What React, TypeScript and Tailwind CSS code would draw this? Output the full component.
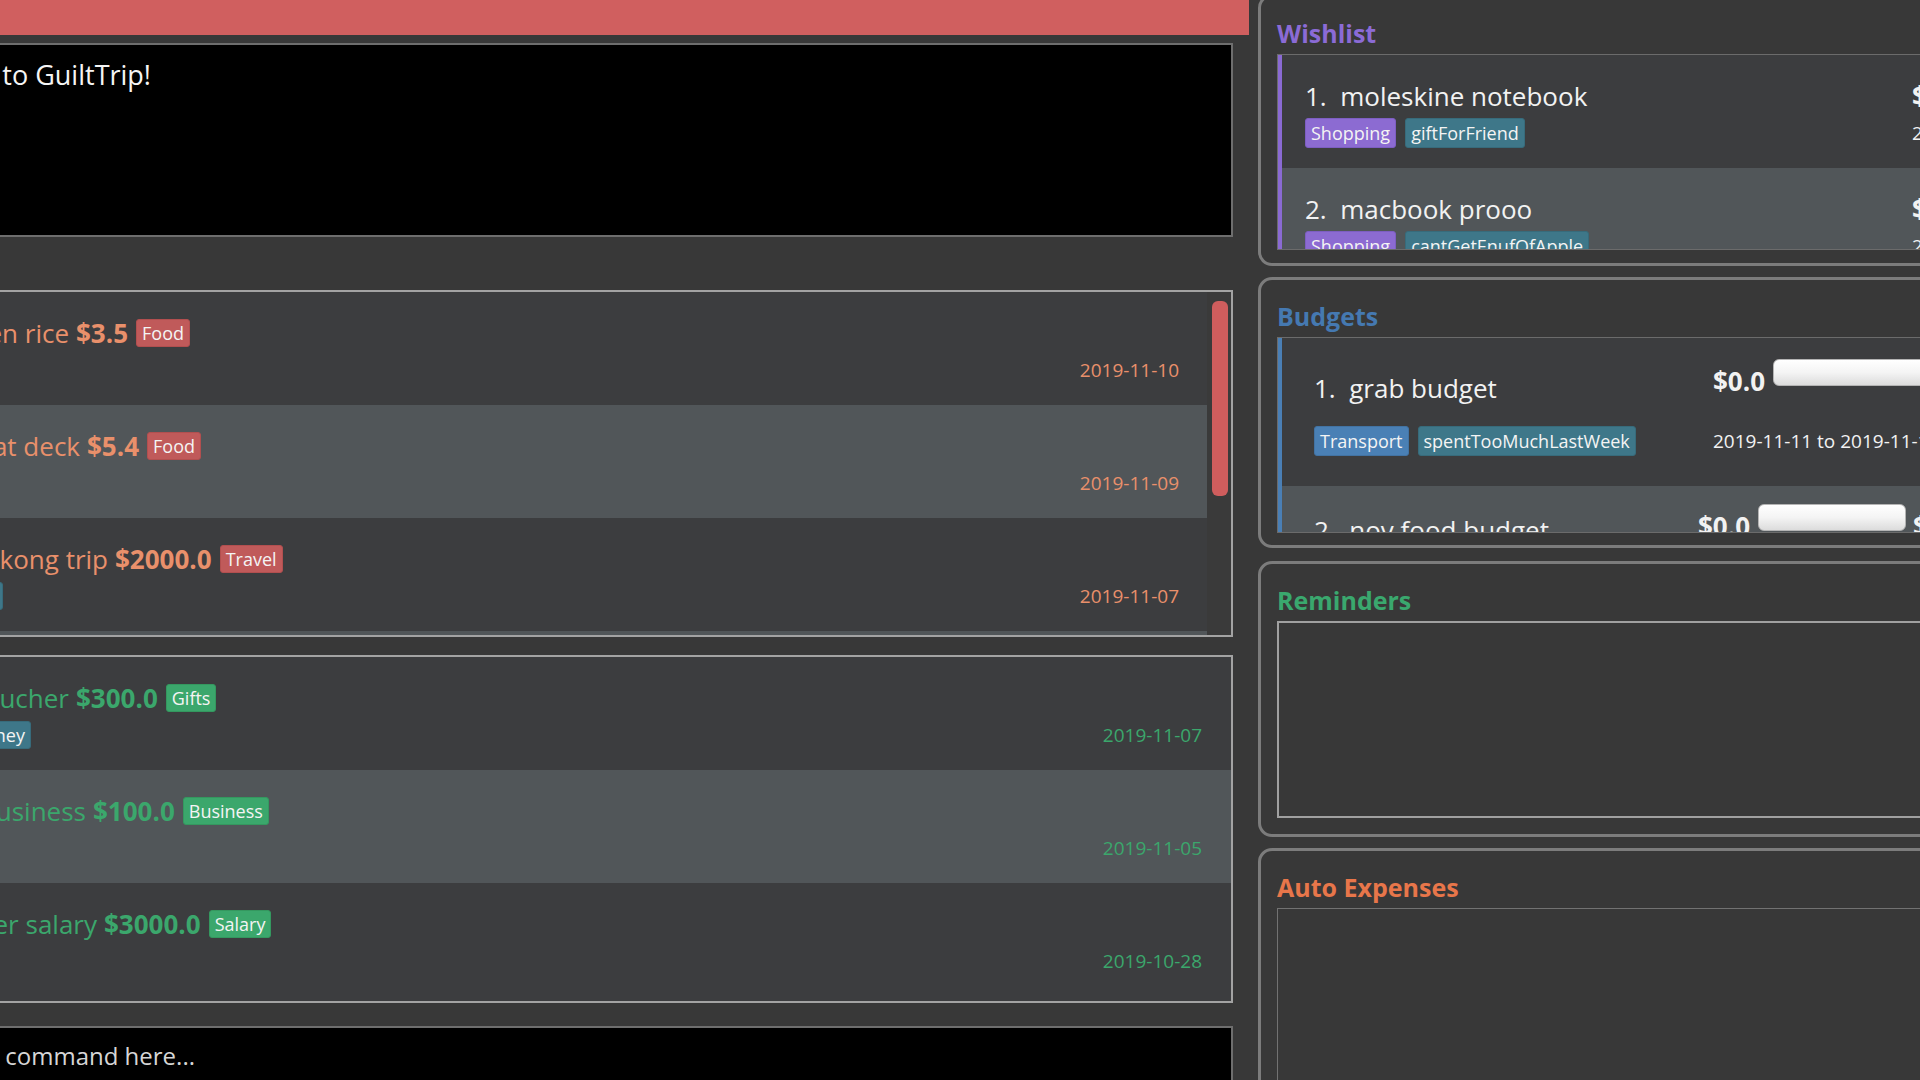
import React from 'react';

type Entry = {
  desc: string;
  descW: string;
  amount: string;
  cat: string;
  tags?: string[];
  tagsW?: string;
  date: string;
};

const expenses: Entry[] = [
  { desc: '1.  chicken rice', descW: 'w-[69px]', amount: '$3.5', cat: 'Food', date: '2019-11-10' },
  { desc: '2.  lunch at deck', descW: 'w-[80px]', amount: '$5.4', cat: 'Food', date: '2019-11-09' },
  { desc: '3.  hong kong trip', descW: 'w-[108px]', amount: '$2000.0', cat: 'Travel', tags: ['holiday'], tagsW: 'w-[3px]', date: '2019-11-07' },
  { desc: '4.  bubble tea', descW: 'w-[60px]', amount: '$3.2', cat: 'Food', date: '2019-11-06' },
];

const income: Entry[] = [
  { desc: '1.  shopee voucher', descW: 'w-[69px]', amount: '$300.0', cat: 'Gifts', tags: ['freeMoney'], tagsW: 'w-[31px]', date: '2019-11-07' },
  { desc: '2.  small business', descW: 'w-[86px]', amount: '$100.0', cat: 'Business', date: '2019-11-05' },
  { desc: '3.  summer salary', descW: 'w-[97px]', amount: '$3000.0', cat: 'Salary', date: '2019-10-28' },
];

const Tag = ({ label, color }: { label: string; color: string }) => (
  <span className={`h-[28px] leading-[26px] px-[5px] text-[18px] text-[#f4f4f4] rounded-[3px] border whitespace-nowrap shrink-0 ${color}`}>
    {label}
  </span>
);

const LedgerRow = ({ entry, light, text, tag, pad }: { entry: Entry; light: boolean; text: string; tag: string; pad: string }) => (
  <div className={`h-[113px] shrink-0 flex flex-col pt-[24px] ${pad} ${light ? 'bg-[#515659]' : 'bg-[#3c3d3f]'} ${text}`}>
    <div className="h-[34px] flex items-center whitespace-nowrap text-[26px]">
      <div className={`flex justify-end shrink-0 ${entry.descW}`}>
        <span className="whitespace-pre">{entry.desc}</span>
      </div>
      <span className="ml-[7px] font-bold">{entry.amount}</span>
      <span className="ml-[8px] flex">
        <Tag label={entry.cat} color={tag} />
      </span>
    </div>
    <div className="mt-[5px] h-[30px] flex items-center justify-between">
      <div className={`flex justify-end gap-[8px] shrink-0 ${entry.tagsW ?? 'w-0'}`}>
        {entry.tags?.map((t) => (
          <Tag key={t} label={t} color="bg-[#3e7789] border-[#376b7b]" />
        ))}
      </div>
      <span className="text-[19px]">{entry.date}</span>
    </div>
  </div>
);

const Panel = ({ title, color, className, children }: { title: string; color: string; className: string; children: React.ReactNode }) => (
  <div className={`w-[760px] shrink-0 border-[3px] border-[#7c7c7c] rounded-[14px] pl-[16px] pt-[21px] overflow-hidden ${className}`}>
    <div className={`h-[30px] leading-[30px] text-[25px] font-bold ${color}`}>{title}</div>
    {children}
  </div>
);

const SmallTag = ({ label, color }: { label: string; color: string }) => (
  <span className={`h-[30px] leading-[28px] px-[5px] text-[18px] text-[#f4f4f4] rounded-[3px] border whitespace-nowrap shrink-0 ${color}`}>
    {label}
  </span>
);

const purple = 'bg-[#8c6bd2] border-[#7d5ec2]';
const teal = 'bg-[#3e7789] border-[#376b7b]';
const blue = 'bg-[#4a80b5] border-[#4273a3]';

const WishRow = ({ idx, name, tags, price, date, light }: { idx: string; name: string; tags: string[]; price: string; date: string; light: boolean }) => (
  <div className={`h-[113px] shrink-0 flex border-l-4 border-[#8a6ad3] pl-[23px] text-[#f2f2f2] ${light ? 'bg-[#515659]' : 'bg-[#3c3d3f]'}`}>
    <div className="w-[607px] shrink-0 flex flex-col pt-[23px]">
      <div className="h-[36px] leading-[36px] text-[26px] whitespace-pre">{`${idx}  ${name}`}</div>
      <div className="mt-[4px] h-[30px] flex gap-[9px]">
        {tags.map((t, i) => (
          <SmallTag key={t} label={t} color={i === 0 ? purple : teal} />
        ))}
      </div>
    </div>
    <div className="flex flex-col pt-[23px] whitespace-nowrap">
      <div className="h-[36px] leading-[36px] text-[26px] font-bold">{price}</div>
      <div className="mt-[4px] h-[30px] leading-[30px] text-[19px]">{date}</div>
    </div>
  </div>
);

const Bar = ({ w }: { w: string }) => (
  <div className={`h-[27px] shrink-0 rounded-[6px] border border-[#b4b4b4] bg-gradient-to-b from-white via-[#f4f4f4] to-[#dcdcdc] ${w}`} />
);

export default function App() {
  return (
    <div className="w-[1920px] h-[1080px] overflow-hidden flex bg-[#383838] font-['Open_Sans','Noto_Sans',sans-serif] text-[#f2f2f2]">
      {/* main column */}
      <div className="w-[1249px] shrink-0 flex flex-col">
        <div className="h-[35px] shrink-0 bg-[#d05f5f]" />
        <div className="pr-[16px] flex flex-col">
          <div className="mt-[8px] h-[194px] shrink-0 bg-black border-2 border-l-0 border-[#6e6e6e] pt-[12px]">
            <div className="w-[151px] flex justify-end whitespace-nowrap text-[27px] leading-[36px] text-[#f5f5f5]">
              Welcome to GuiltTrip!
            </div>
          </div>

          <div className="mt-[53px] h-[347px] shrink-0 flex border-2 border-l-0 border-[#a3a3a3] bg-[#3c3d3f] overflow-hidden">
            <div className="flex-1 flex flex-col overflow-hidden">
              {expenses.map((e, i) => (
                <LedgerRow
                  key={e.desc}
                  entry={e}
                  light={i % 2 === 1}
                  text="text-[#e9906b]"
                  tag="bg-[#c05a5a] border-[#b24f4f]"
                  pad="pr-[28px]"
                />
              ))}
            </div>
            <div className="w-[24px] shrink-0 bg-[#3a3a3a] pt-[9px] pl-[5px]">
              <div className="w-[16px] h-[195px] rounded-[6px] bg-[#cf5d5d]" />
            </div>
          </div>

          <div className="mt-[18px] h-[348px] shrink-0 flex flex-col border-2 border-l-0 border-[#a3a3a3] bg-[#3c3d3f] overflow-hidden">
            {income.map((e, i) => (
              <LedgerRow
                key={e.desc}
                entry={e}
                light={i % 2 === 1}
                text="text-[#3ba76c]"
                tag="bg-[#3ba76c] border-[#34985f]"
                pad="pr-[29px]"
              />
            ))}
          </div>

          <div className="mt-[23px] h-[60px] shrink-0 flex items-center bg-black border-2 border-l-0 border-[#6e6e6e]">
            <div className="w-[195px] flex justify-end whitespace-nowrap text-[24px] text-[#d6d6d6]">
              Enter command here...
            </div>
          </div>
        </div>
      </div>

      {/* side panels */}
      <div className="w-[671px] shrink-0 pl-[9px] flex flex-col overflow-hidden">
        <Panel title="Wishlist" color="text-[#8b6bd6]" className="-mt-[6px] h-[272px]">
          <div className="mt-[6px] h-[196px] flex flex-col border border-[#6b6b6b] overflow-hidden">
            <WishRow idx="1." name="moleskine notebook" tags={['Shopping', 'giftForFriend']} price="$25.0" date="2019-11-20" light={false} />
            <WishRow idx="2." name="macbook prooo" tags={['Shopping', 'cantGetEnufOfApple']} price="$3000.0" date="2019-12-25" light />
          </div>
        </Panel>

        <Panel title="Budgets" color="text-[#4579b1]" className="mt-[11px] h-[271px]">
          <div className="mt-[6px] h-[196px] flex flex-col border border-[#6b6b6b] overflow-hidden">
            <div className="h-[148px] shrink-0 flex border-l-4 border-[#4a7fb5] pl-[32px] bg-[#3c3d3f]">
              <div className="w-[399px] shrink-0 flex flex-col pt-[32px]">
                <div className="h-[36px] leading-[36px] text-[26px] whitespace-pre">1.  grab budget</div>
                <div className="mt-[20px] h-[30px] flex gap-[9px]">
                  <SmallTag label="Transport" color={blue} />
                  <SmallTag label="spentTooMuchLastWeek" color={teal} />
                </div>
              </div>
              <div className="flex flex-col pt-[21px] whitespace-nowrap">
                <div className="flex items-start">
                  <span className="mt-[7px] h-[30px] leading-[30px] text-[26px] font-bold">$0.0</span>
                  <div className="ml-[8px]">
                    <Bar w="w-[220px]" />
                  </div>
                </div>
                <div className="mt-[32px] h-[26px] leading-[26px] text-[19px]">2019-11-11 to 2019-11-17</div>
              </div>
            </div>
            <div className="h-[148px] shrink-0 flex border-l-4 border-[#4a7fb5] pl-[32px] bg-[#515659]">
              <div className="w-[384px] shrink-0 flex flex-col pt-[26px]">
                <div className="h-[36px] leading-[36px] text-[26px] whitespace-pre">2.  nov food budget</div>
              </div>
              <div className="flex flex-col pt-[18px] whitespace-nowrap">
                <div className="flex items-start">
                  <span className="mt-[7px] h-[30px] leading-[30px] text-[26px] font-bold">$0.0</span>
                  <div className="ml-[8px]">
                    <Bar w="w-[148px]" />
                  </div>
                  <span className="ml-[7px] mt-[7px] h-[30px] leading-[30px] text-[26px] font-bold">$200.0</span>
                </div>
              </div>
            </div>
          </div>
        </Panel>

        <Panel title="Reminders" color="text-[#3aa86e]" className="mt-[13px] h-[276px]">
          <div className="mt-[6px] h-[197px] border-2 border-[#a0a0a0]" />
        </Panel>

        <Panel title="Auto Expenses" color="text-[#e8764a]" className="mt-[11px] h-[300px] shrink-0">
          <div className="mt-[6px] h-[220px] border border-[#727272]" />
        </Panel>
      </div>
    </div>
  );
}
